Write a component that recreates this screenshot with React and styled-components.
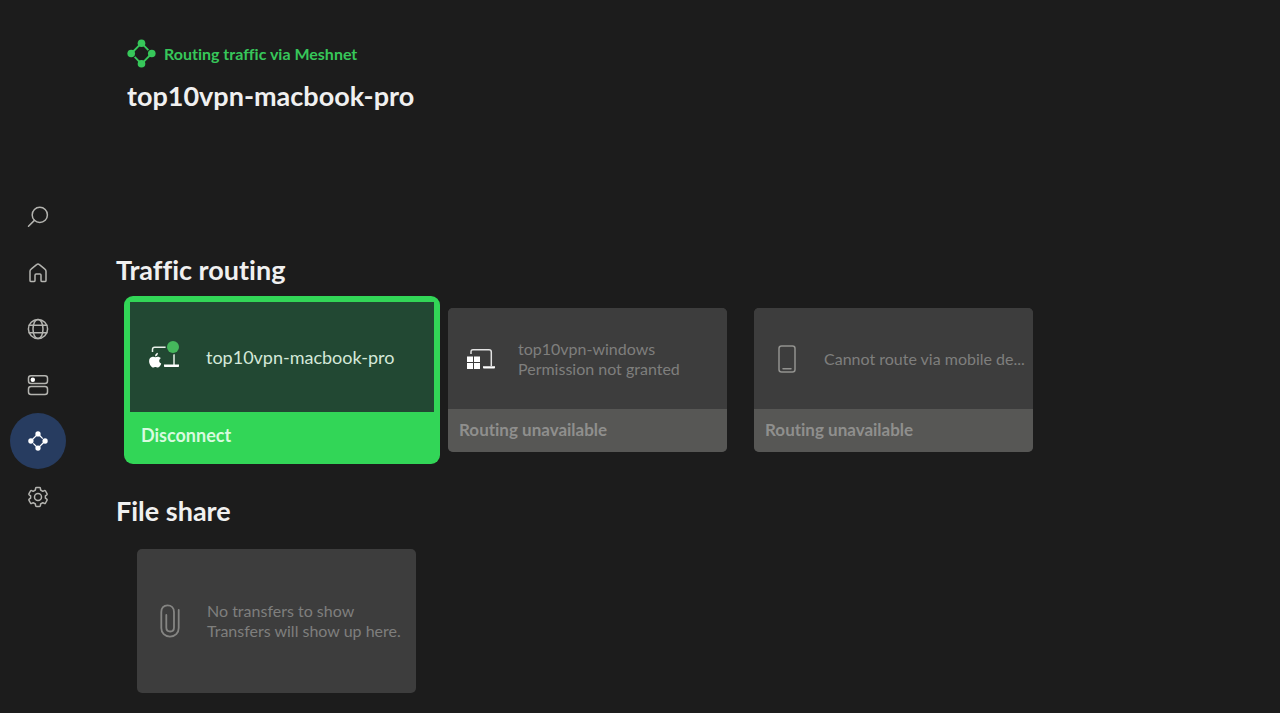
import React from "react";
import styled, { createGlobalStyle } from "styled-components";

const GlobalStyle = createGlobalStyle`
  * {
    box-sizing: border-box;
  }
  body {
    margin: 0;
    background: #1c1c1c;
    color: #f0f0f0;
    font-family: Lato, "Liberation Sans", sans-serif;
    font-variant-ligatures: no-common-ligatures;
  }
`;

const Page = styled.div`
  display: flex;
  min-height: 100vh;
`;

const Rail = styled.nav`
  display: flex;
  flex-direction: column;
  justify-content: center;
  width: 116px;
  padding-left: 10px;
`;

const RailButton = styled.button`
  display: flex;
  align-items: center;
  justify-content: center;
  width: 56px;
  height: 56px;
  padding: 0;
  border: none;
  border-radius: 50%;
  background: ${(props) => (props.$active ? "#273c60" : "transparent")};
  color: ${(props) => (props.$active ? "#ffffff" : "#b4b4b0")};
`;

const Main = styled.main`
  flex: 1;
  min-width: 0;
  padding-top: 39px;
`;

const Header = styled.header`
  padding-left: 11px;
  margin-bottom: 138px;
`;

const Status = styled.div`
  display: flex;
  align-items: center;
  gap: 8px;
  height: 28px;
  margin-bottom: 11px;
  color: #37c75a;
  font-size: 16px;
  font-weight: 700;
`;

const Title = styled.h1`
  margin: 0;
  font-size: 27px;
  line-height: 36px;
  font-weight: 700;
`;

const Section = styled.section`
  & + & {
    margin-top: 29px;
  }
`;

const SectionTitle = styled.h2`
  margin: 0;
  font-size: 27px;
  line-height: 36px;
  font-weight: 700;
`;

const CardRow = styled.div`
  display: flex;
  align-items: center;
  gap: 27px;
  padding: ${(props) => (props.$inset ? "20px 0 0 21px" : "8px 0 0 26px")};
`;

const Card = styled.button`
  display: flex;
  flex-direction: column;
  flex: none;
  width: ${(props) => (props.$active ? 316 : 279)}px;
  height: ${(props) => (props.$active ? 168 : 144)}px;
  margin: ${(props) => (props.$active ? "0 -19px 0 -18px" : "0")};
  padding: ${(props) => (props.$active ? 6 : 0)}px;
  border: none;
  border-radius: ${(props) => (props.$active ? 9 : 5)}px;
  overflow: hidden;
  background: ${(props) => (props.$active ? "#32d657" : "#3d3d3d")};
  color: ${(props) => (props.$active ? "#d5e8da" : "#7f7f7d")};
  font: inherit;
  font-variant-ligatures: inherit;
  text-align: left;
`;

const CardBody = styled.span`
  display: flex;
  flex: 1;
  align-items: center;
  gap: ${(props) => (props.$active ? 26 : 21)}px;
  width: 100%;
  padding: 0 4px 0 ${(props) => (props.$active ? 18 : 17)}px;
  background: ${(props) => (props.$active ? "#224833" : "#3d3d3d")};
`;

const CardIcon = styled.span`
  display: flex;
  flex: none;
  justify-content: center;
  width: 32px;
`;

const CardText = styled.span`
  min-width: 0;
  font-size: ${(props) => (props.$active ? 18 : 16)}px;
  line-height: 20px;
`;

const CardLine = styled.span`
  display: block;
  white-space: nowrap;
`;

const CardAction = styled.span`
  width: 100%;
  padding: ${(props) => (props.$active ? "0 0 0 11px" : "0 0 2px 11px")};
  background: ${(props) => (props.$active ? "#32d657" : "#575755")};
  color: ${(props) => (props.$active ? "#d8fbdf" : "#8f8f8d")};
  font-size: ${(props) => (props.$active ? 18 : 17)}px;
  line-height: ${(props) => (props.$active ? 46 : 41)}px;
  font-weight: 700;
`;

const Svg = ({ children }) => (
  <svg
    width="28"
    height="28"
    viewBox="0 0 28 28"
    fill="none"
    stroke="currentColor"
    strokeWidth="1.5"
    strokeLinecap="round"
    strokeLinejoin="round"
    aria-hidden="true"
  >
    {children}
  </svg>
);

const SearchIcon = () => (
  <Svg>
    <circle cx="15.800" cy="11.900" r="7.600" />
    <path d="M10.400 17.400 4.500 23.300" />
  </Svg>
);

const HomeIcon = () => (
  <Svg>
    <path d="M6 12.200c0-.9.4-1.600 1.100-2.100l5.500-4.500c.8-.7 2-.7 2.800 0l5.500 4.500c.7.5 1.100 1.200 1.100 2.100v9.200c0 .7-.5 1.200-1.200 1.200h-2.600c-.7 0-1.200-.5-1.200-1.200v-5.200c0-.7-.5-1.200-1.200-1.200h-3.600c-.7 0-1.200.5-1.200 1.200v5.200c0 .7-.5 1.200-1.200 1.200H7.200c-.7 0-1.200-.5-1.200-1.200z" />
  </Svg>
);

const GlobeIcon = () => (
  <Svg>
    <circle cx="14" cy="14" r="9.600" />
    <ellipse cx="14" cy="14" rx="5" ry="9.600" />
    <path d="M5.200 10.200h17.600M5.200 17.800h17.600" />
  </Svg>
);

const ServerIcon = () => (
  <Svg>
    <rect x="4.500" y="4.800" width="19" height="7.800" rx="2.500" />
    <rect x="4.500" y="15.600" width="19" height="7.800" rx="2.500" />
    <circle cx="8.800" cy="8.700" r="1.500" fill="#fff" stroke="#fff" />
  </Svg>
);

const MeshIcon = ({ size = 20 }) => (
  <svg width={size} height={size} viewBox="3 3 22 22" fill="none" aria-hidden="true">
    <path
      d="M14 6.200 6.200 14M15.500 7.700 19.200 11.400M21.800 14 14 21.800M12.500 20.300 8.800 16.600"
      stroke="currentColor"
      strokeWidth="1.400"
    />
    <g fill="currentColor">
      <circle cx="14" cy="6.200" r="2.900" />
      <circle cx="21.800" cy="14" r="2.900" />
      <circle cx="14" cy="21.800" r="2.900" />
      <circle cx="6.200" cy="14" r="2.900" />
    </g>
  </svg>
);

const GearIcon = () => (
  <Svg>
    <path d="M11.400 7 11.600 5.300Q11.700 4.500 12.500 4.500H15.500Q16.300 4.500 16.400 5.300L16.600 7 18.800 8.300 20.300 7.600Q21 7.200 21.500 8L23 10.600Q23.400 11.300 22.800 11.800L21.400 12.800V15.200L22.800 16.200Q23.400 16.700 23 17.400L21.500 20Q21 20.800 20.300 20.400L18.800 19.700 16.600 21 16.400 22.700Q16.300 23.500 15.500 23.500H12.500Q11.700 23.500 11.600 22.700L11.400 21 9.200 19.700 7.700 20.400Q7 20.800 6.500 20L5 17.400Q4.600 16.700 5.200 16.200L6.600 15.200V12.800L5.200 11.800Q4.600 11.300 5 10.600L6.500 8Q7 7.200 7.700 7.600L9.200 8.300z" />
    <circle cx="14" cy="14" r="3.500" />
  </Svg>
);

const MacIcon = () => (
  <svg width="32" height="34" viewBox="0 0 32 34" fill="none" aria-hidden="true">
    <path d="M4.500 12V9.500C4.500 8 5.200 7.300 6.700 7.300H24c1.400 0 2 .6 2 2V25" stroke="#e9f0ea" strokeWidth="1.500" />
    <path d="M16 24.500h15v1.500c0 .6-.4 1-1 1H17c-.6 0-1-.4-1-1z" fill="#fff" />
    <path
      d="M7.300 17.300c-1-.5-1.800-.7-2.600-.5C2.500 17 1 18.700 1.100 21.200c.1 3.100 2.200 6.300 4.200 6.300.9 0 1.200-.5 2.100-.5s1.300.5 2.200.5c1.600 0 3.200-2.200 3.600-4-2.500-1-2.600-4.200-.4-5.300-1-1.400-3.300-2-5.500-.9zM7.100 16.400c-.1-1.800 1-3.300 2.800-3.600.1 1.900-1 3.400-2.800 3.600z"
      fill="#fff"
    />
    <circle cx="25" cy="7" r="7.500" fill="#224833" />
    <circle cx="25" cy="7" r="6" fill="#45b75c" />
  </svg>
);

const WindowsIcon = () => (
  <svg width="28" height="22" viewBox="0 0 28 22" fill="none" aria-hidden="true">
    <path d="M4 6V4c0-1.500.7-2.200 2-2.200h16c1.500 0 2.300.8 2.300 2.200v14" stroke="#e2e2e2" strokeWidth="1.500" />
    <path
      d="M0 8.500h6v5.500H0zM7 8.500h6v5.500H7zM0 15h6v6H0zM7 15h6v6H7zM16 18.200h12v1c0 .8-.4 1.300-1.200 1.300h-9.600c-.8 0-1.200-.5-1.200-1.300z"
      fill="#fff"
    />
  </svg>
);

const PhoneIcon = () => (
  <svg width="18" height="28" viewBox="0 0 18 28" fill="none" stroke="#92928f" strokeWidth="1.500" aria-hidden="true">
    <rect x="1" y="1" width="16" height="26" rx="2.500" />
    <path d="M5 23.700h8" strokeLinecap="round" />
  </svg>
);

const ClipIcon = () => (
  <svg width="20" height="34" viewBox="0 0 20 34" fill="none" stroke="#858583" strokeWidth="1.800" strokeLinecap="round" aria-hidden="true">
    <path d="M18.700 6v18c0 5-3.500 8.600-8.700 8.600S1.300 29 1.300 24V8c0-4 2.400-6.700 6.200-6.700S14 4 14 8v15.500c0 2.500-1.500 4-3.800 4s-3.900-1.500-3.900-4V11" />
  </svg>
);

const railItems = [
  { label: "Search", Icon: SearchIcon },
  { label: "Home", Icon: HomeIcon },
  { label: "Countries", Icon: GlobeIcon },
  { label: "Servers", Icon: ServerIcon },
  { label: "Meshnet", Icon: MeshIcon, active: true },
  { label: "Settings", Icon: GearIcon },
];

const devices = [
  { lines: ["top10vpn-macbook-pro"], action: "Disconnect", Icon: MacIcon, active: true },
  { lines: ["top10vpn-windows", "Permission not granted"], action: "Routing unavailable", Icon: WindowsIcon },
  { lines: ["Cannot route via mobile de..."], action: "Routing unavailable", Icon: PhoneIcon },
];

const DeviceCard = ({ lines, action, Icon, active }) => (
  <Card type="button" $active={active} disabled={!active}>
    <CardBody $active={active}>
      <CardIcon>
        <Icon />
      </CardIcon>
      <CardText $active={active}>
        {lines.map((line) => (
          <CardLine key={line}>{line}</CardLine>
        ))}
      </CardText>
    </CardBody>
    {action && <CardAction $active={active}>{action}</CardAction>}
  </Card>
);

const App = () => {
  return (
    <Page>
      <GlobalStyle />
      <Rail>
        {railItems.map(({ label, Icon, active }) => (
          <RailButton key={label} type="button" aria-label={label} $active={active}>
            <Icon />
          </RailButton>
        ))}
      </Rail>
      <Main>
        <Header>
          <Status>
            <MeshIcon size={29} />
            Routing traffic via Meshnet
          </Status>
          <Title>top10vpn-macbook-pro</Title>
        </Header>
        <Section>
          <SectionTitle>Traffic routing</SectionTitle>
          <CardRow>
            {devices.map((device) => (
              <DeviceCard key={device.lines[0]} {...device} />
            ))}
          </CardRow>
        </Section>
        <Section>
          <SectionTitle>File share</SectionTitle>
          <CardRow $inset>
            <DeviceCard lines={["No transfers to show", "Transfers will show up here."]} Icon={ClipIcon} />
          </CardRow>
        </Section>
      </Main>
    </Page>
  );
};

export default App;
